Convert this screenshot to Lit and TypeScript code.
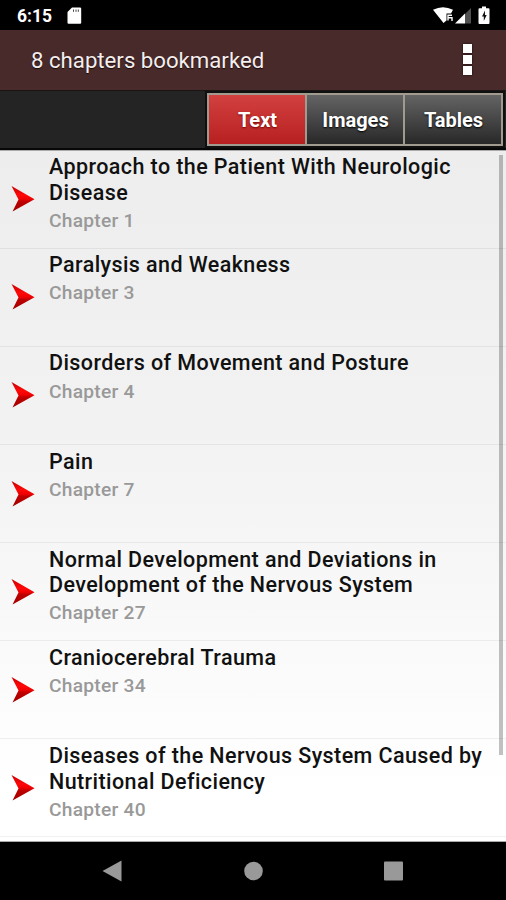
import { LitElement, html, css } from "lit";
import { customElement, property, state } from "lit/decorators.js";
import { classMap } from "lit/directives/class-map.js";

interface Chapter {
  title: string;
  number: number;
}

const CHAPTERS: Chapter[] = [
  { title: "Approach to the Patient With Neurologic Disease", number: 1 },
  { title: "Paralysis and Weakness", number: 3 },
  { title: "Disorders of Movement and Posture", number: 4 },
  { title: "Pain", number: 7 },
  { title: "Normal Development and Deviations in Development of the Nervous System", number: 27 },
  { title: "Craniocerebral Trauma", number: 34 },
  { title: "Diseases of the Nervous System Caused by Nutritional Deficiency", number: 40 },
];

@customElement("status-bar")
class StatusBar extends LitElement {
  static styles = css`
    :host {
      display: flex;
      align-items: center;
      height: 30px;
      padding: 0 14px 0 17px;
      background: #000;
      color: #fff;
      font: 700 17.5px/30px Roboto, sans-serif;
      box-sizing: border-box;
    }
    .time { width: 50px; padding-top: 2px; }
    .spacer { flex: 1; }
    svg { display: block; }
  `;
  render() {
    return html`
      <span class="time">6:15</span>
      <svg width="16" height="30" viewBox="67 0 16 30">
        <path fill="#fff" d="M72 7.500h8q1.200 0 1.200 1.200v14q0 1-1 1H68.500q-1 0-1-1V12z" />
        <path stroke="#444" stroke-width="1" d="M73.500 9.500v2.300M76 9.500v2.300M78.300 9.500v2.300" />
      </svg>
      <span class="spacer"></span>
      <svg width="60" height="30" viewBox="432 0 60 30">
        <path fill="#fff" d="M433 9.800Q443 4.500 453 9.800L451 13.500H446.500V20.500L443.500 23z" />
        <path fill="none" stroke="#fff" stroke-width="1.400" d="M452 15.200h-4v5.300M448 17.800h4v3.200" />
        <path fill="#505050" d="M465 14L471 8V23.500H465z" />
        <path fill="#fff" d="M455 23.500L465 13.500V23.500z" />
        <path fill="#fff" d="M482 6.500h4v1.700h2.500q1 0 1 1V23q0 1-1 1h-9q-1 0-1-1V9.200q0-1 1-1h2.500z" />
        <path fill="#111" d="M485 10.500l-3 6h1.800v4.500l2.900-6h-1.700z" />
      </svg>
    `;
  }
}

@customElement("chapter-row")
class ChapterRow extends LitElement {
  @property() heading = "";
  @property({ type: Number }) number = 0;

  static styles = css`
    :host {
      display: flex;
      box-sizing: border-box;
      height: 98.15px;
      flex: none;
      padding: 3.6px 16px 0 10px;
      border-bottom: 1px solid rgba(0, 0, 0, 0.055);
    }
    .marker { flex: none; width: 26px; height: 28px; margin: 31px 13px 0 0; }
    .title {
      font: 500 21.5px/25.6px Roboto, sans-serif;
      letter-spacing: 0.41px;
      color: #111;
    }
    .sub {
      margin-top: 2.6px;
      font: 500 19.2px/25px Roboto, sans-serif;
      letter-spacing: 0.25px;
      color: #999;
    }
  `;
  render() {
    return html`
      <svg class="marker" viewBox="0 0 26 28">
        <defs>
          <linearGradient id="tone" x1="0" y1="0" x2="0" y2="1">
            <stop offset="0" stop-color="#c80000" />
            <stop offset="0.35" stop-color="#ff0808" />
            <stop offset="0.52" stop-color="#ee0000" />
            <stop offset="0.6" stop-color="#c00000" />
            <stop offset="1" stop-color="#a00000" />
          </linearGradient>
        </defs>
        <path fill="url(#tone)" d="M1.500 1L24.500 14.200L2.500 26.500L8.500 14.500z" />
      </svg>
      <div>
        <div class="title">${this.heading}</div>
        <div class="sub">Chapter ${this.number}</div>
      </div>
    `;
  }
}

@customElement("app-root")
class AppRoot extends LitElement {
  @state() private tab = "Text";

  static styles = css`
    :host {
      display: flex;
      flex-direction: column;
      width: 506px;
      height: 900px;
      overflow: hidden;
      font-family: Roboto, sans-serif;
      background: #000;
    }
    header {
      display: flex;
      align-items: center;
      justify-content: space-between;
      flex: none;
      height: 60px;
      box-sizing: border-box;
      padding: 0 34px 1px 31px;
      background: #482a2a;
      color: #f4eeee;
    }
    h1 {
      margin: 0;
      padding-top: 1px;
      font: 400 22.2px/30px Roboto, sans-serif;
      text-shadow: 0 1px 1px #1c0a0a;
    }
    .menu { display: flex; flex-direction: column; gap: 2px; }
    .menu i { width: 9px; height: 9px; background: #fff; box-shadow: 0 0 2px #180808; }
    nav {
      display: flex;
      justify-content: flex-end;
      flex: none;
      height: 60px;
      box-sizing: border-box;
      padding: 1.5px 3px 2px 0;
      background: #242424;
      border-top: 1px solid #1a1414;
      border-bottom: 2px solid #080808;
    }
    .tabs {
      display: grid;
      grid-template-columns: repeat(3, 1fr);
      gap: 2px;
      width: 296px;
      box-sizing: border-box;
      padding: 2px;
      background: #a09b8e;
      box-shadow: 0 0 0 2px #101010;
    }
    .tab {
      border: 0;
      padding: 2px 0 0 1px;
      color: #fff;
      font: 700 20px/24px Roboto, sans-serif;
      text-shadow: 0 1px 2px #000;
      background: linear-gradient(#646464, #282828);
    }
    .active { background: linear-gradient(#d24040, #b82020); text-shadow: 0 1px 2px #700; }
    .body {
      display: flex;
      flex: none;
      height: 692px;
      overflow: hidden;
      position: relative;
      background: linear-gradient(#ededed, #f3f3f3 45%, #fff 92%);
      box-shadow: inset 0 1px #aaa, inset 0 -1px #aaa;
    }
    .list { display: flex; flex-direction: column; flex: 1; padding-top: 0.5px; }
    .thumb {
      position: absolute;
      right: 3px;
      top: 5px;
      width: 4px;
      height: 600px;
      background: rgba(0, 0, 0, 0.24);
    }
    footer { flex: 1; }
    footer svg { display: block; }
  `;

  render() {
    return html`
      <status-bar></status-bar>
      <header>
        <h1>8 chapters bookmarked</h1>
        <div class="menu"><i></i><i></i><i></i></div>
      </header>
      <nav>
        <div class="tabs">
          ${["Text", "Images", "Tables"].map(
            (t) => html`<button
              class=${classMap({ tab: true, active: t === this.tab })}
              @click=${() => (this.tab = t)}
            >${t}</button>`
          )}
        </div>
      </nav>
      <div class="body">
        <div class="list">
          ${CHAPTERS.map(
            (c) => html`<chapter-row .heading=${c.title} .number=${c.number}></chapter-row>`
          )}
        </div>
        <div class="thumb"></div>
      </div>
      <footer>
        <svg width="506" height="58" viewBox="0 842 506 58" fill="#999">
          <path d="M102.500 871L121.500 860.500V881.500z" />
          <circle cx="253.500" cy="871" r="9.300" />
          <rect x="384" y="861.500" width="19" height="19" rx="1" />
        </svg>
      </footer>
    `;
  }
}
